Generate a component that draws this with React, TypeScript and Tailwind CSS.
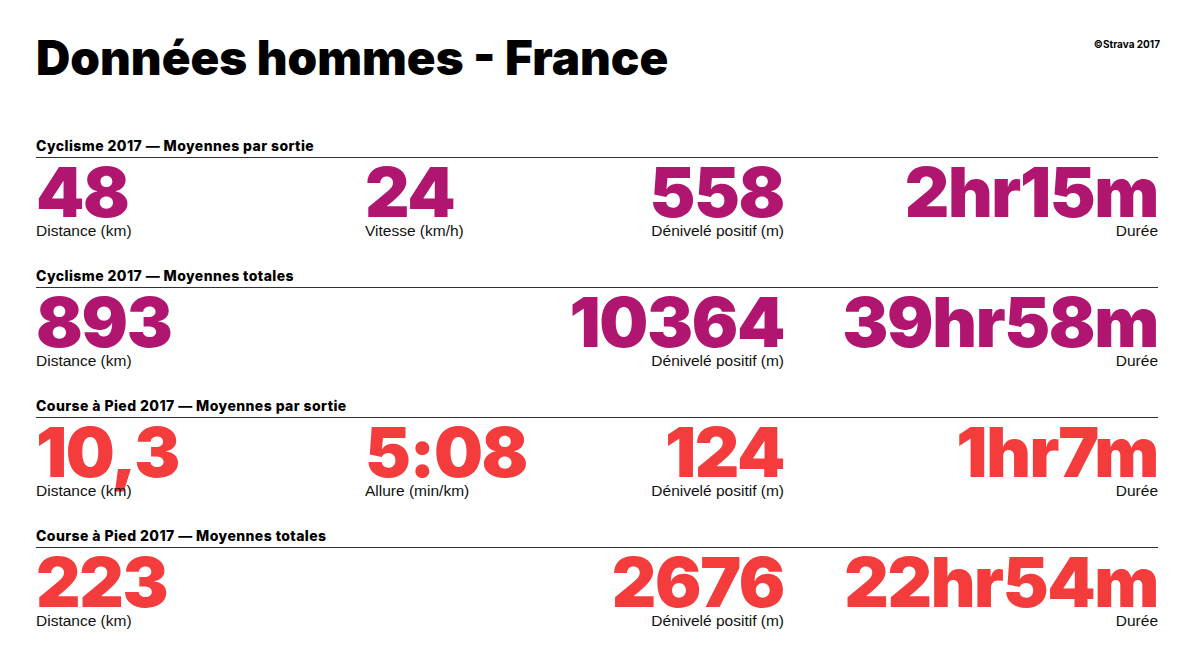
import React from "react";

type Stat = { value: string; label: string };
type Section = { title: string; color: "purple" | "red"; cells: (Stat | null)[] };

const sections: Section[] = [
  {
    title: "Cyclisme 2017 — Moyennes par sortie",
    color: "purple",
    cells: [
      { value: "48", label: "Distance (km)" },
      { value: "24", label: "Vitesse (km/h)" },
      { value: "558", label: "Dénivelé positif (m)" },
      { value: "2hr15m", label: "Durée" },
    ],
  },
  {
    title: "Cyclisme 2017 — Moyennes totales",
    color: "purple",
    cells: [
      { value: "893", label: "Distance (km)" },
      null,
      { value: "10364", label: "Dénivelé positif (m)" },
      { value: "39hr58m", label: "Durée" },
    ],
  },
  {
    title: "Course à Pied 2017 — Moyennes par sortie",
    color: "red",
    cells: [
      { value: "10,3", label: "Distance (km)" },
      { value: "5:08", label: "Allure (min/km)" },
      { value: "124", label: "Dénivelé positif (m)" },
      { value: "1hr7m", label: "Durée" },
    ],
  },
  {
    title: "Course à Pied 2017 — Moyennes totales",
    color: "red",
    cells: [
      { value: "223", label: "Distance (km)" },
      null,
      { value: "2676", label: "Dénivelé positif (m)" },
      { value: "22hr54m", label: "Durée" },
    ],
  },
];

const heavy = { fontFamily: "Inter, 'Liberation Sans', sans-serif" };
const light = { fontFamily: "'Liberation Sans', Arial, sans-serif" };

function Cell({ stat, align, color }: { stat: Stat | null; align: "left" | "right"; color: "purple" | "red" }) {
  if (!stat) return <div />;
  return (
    <div className={align === "right" ? "flex flex-col items-end" : "flex flex-col items-start"}>
      <div
        className={
          "whitespace-nowrap text-[69px] leading-[60px] font-black tracking-[-0.02em] " +
          (color === "purple" ? "text-[#b0166f]" : "text-[#f43c3c]")
        }
        style={heavy}
      >
        {stat.value}
      </div>
      <div className="whitespace-nowrap text-[15.5px] leading-[17px] text-[#111]" style={light}>
        {stat.label}
      </div>
    </div>
  );
}

export default function App() {
  return (
    <div className="w-[1200px] h-[663px] bg-white overflow-hidden pl-[36px] pr-[40px] pt-[34px]">
      <div className="flex items-start justify-between">
        <h1 className="text-[47.5px] leading-[48px] font-black tracking-[0em] text-black" style={heavy}>
          Données hommes - France
        </h1>
        <div className="mt-[4px] text-[10px] leading-[12px] font-bold text-black" style={heavy}>
          ©Strava 2017
        </div>
      </div>
      <div className="mt-[56px] flex flex-col gap-[28px] w-[1122px]">
        {sections.map((s) => (
          <div key={s.title} className="h-[102px]">
            <div
              className="text-[14px] leading-[16px] font-extrabold tracking-[0.03em] text-black pb-[3px] border-b-[1.5px] border-[#333]"
              style={heavy}
            >
              {s.title}
            </div>
            <div className="mt-[4px] grid grid-cols-[329px_170px_249px_374px]">
              <Cell stat={s.cells[0]} align="left" color={s.color} />
              <Cell stat={s.cells[1]} align="left" color={s.color} />
              <Cell stat={s.cells[2]} align="right" color={s.color} />
              <Cell stat={s.cells[3]} align="right" color={s.color} />
            </div>
          </div>
        ))}
      </div>
    </div>
  );
}
